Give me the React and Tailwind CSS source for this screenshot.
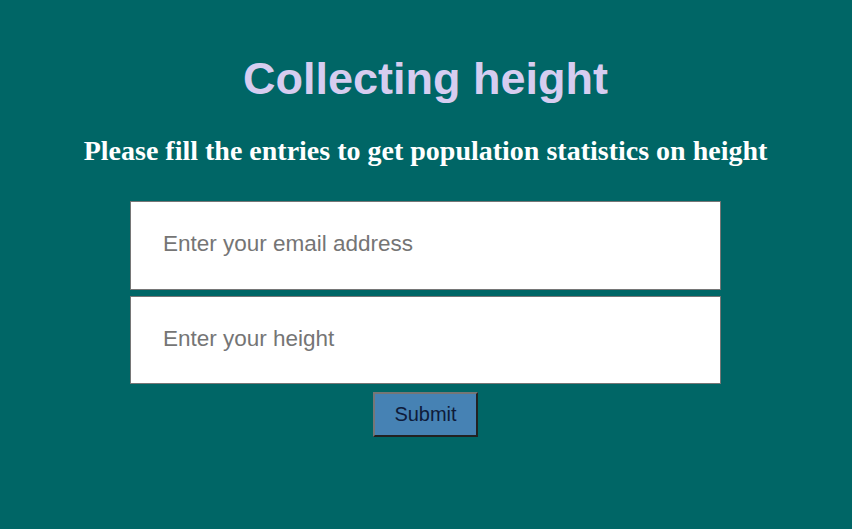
export default function App() {
  return (
    <div className="min-h-[529px] w-full bg-[#006666] flex flex-col items-center pr-[1px]" style={{ fontFamily: '"Liberation Sans", Arial, sans-serif' }}>
      <h1 className="mt-[53px] text-[45px] leading-[52px] font-bold text-[#d6cdf0]" style={{ fontFamily: '"Liberation Sans", Arial, sans-serif' }}>
        Collecting height
      </h1>
      <h2 className="mt-[30px] text-[28px] leading-[32px] font-bold text-white" style={{ fontFamily: '"Liberation Serif", "Times New Roman", serif' }}>
        Please fill the entries to get population statistics on height
      </h2>
      <div className="mt-[34px] flex flex-col gap-[6px]">
        <input
          type="text"
          placeholder="Enter your email address"
          className="w-[591px] h-[89px] bg-white border border-[#767676] pl-[32px] pb-[3px] text-[22.5px] text-black placeholder:text-[#757575] outline-none"
        />
        <input
          type="text"
          placeholder="Enter your height"
          className="w-[591px] h-[88px] bg-white border border-[#767676] pl-[32px] pb-[2px] text-[22.5px] text-black placeholder:text-[#757575] outline-none"
        />
      </div>
      <button className="mt-[8px] w-[105px] h-[45px] pb-[2px] bg-[#4682b4] text-[20px] text-[#0e1b3a] border-2 border-t-[#767676] border-l-[#767676] border-r-[#222] border-b-[#222]">
        Submit
      </button>
    </div>
  );
}
